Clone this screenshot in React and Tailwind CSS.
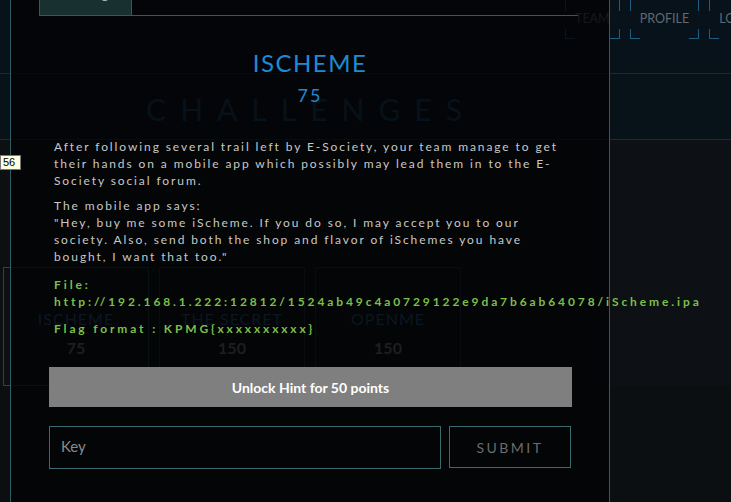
import React from "react"

const NavItem = ({ label }) => (
  <div className="relative h-[40px] px-[10px] flex items-center text-[12.5px] text-[#5f6b74] uppercase">
    <span className="absolute left-0 top-0 w-[10px] h-[12px] border-l border-t border-[#1e5b80]" />
    <span className="absolute right-0 top-0 w-[10px] h-[12px] border-r border-t border-[#1e5b80]" />
    <span className="absolute left-0 bottom-0 w-[10px] h-[10px] border-l border-b border-[#1e5b80]" />
    <span className="absolute right-0 bottom-0 w-[10px] h-[10px] border-r border-b border-[#1e5b80]" />
    {label}
  </div>
)

const Card = ({ name, score, solved }) => (
  <div
    className={`w-[146px] h-[119px] border flex flex-col items-center justify-center gap-[8px] pt-[16px] ${
      solved ? "border-[#1f4d46]" : "border-[#24323c]"
    }`}
  >
    <p className="w-[110px] text-[16px] leading-[19px] tracking-[1px] text-[#2c6494] text-center uppercase">{name}</p>
    <p className="text-[16px] font-bold text-[#8a8a8a]">{score}</p>
  </div>
)

export default function App() {
  return (
    <div className="relative w-[731px] h-[502px] overflow-hidden bg-[#0c0f12] font-['Lato',sans-serif]">
      {/* page behind the modal */}
      <header className="h-[75px] bg-[#07121a] border-b border-[#1a2a31] flex items-start gap-[10px] pl-[565px] -mt-[1px]">
        <NavItem label="Team" />
        <NavItem label="Profile" />
        <NavItem label="Logout" />
      </header>
      <section className="h-[66px] bg-[#081219] border-b border-[#1d2d34] flex items-center pt-[6px]">
        <h2 className="w-[622px] text-center text-[30px] tracking-[14px] text-[#1a4a6c] uppercase">Challenges</h2>
      </section>
      <div className="pt-[127px] pl-[3px] flex gap-[10px] bg-gradient-to-r from-[#0c1013] to-[#0d1014]">
        <Card name="iScheme" score="75" solved />
        <Card name="The Secret" score="150" />
        <Card name="OpenMe" score="150" />
      </div>

      {/* challenge modal */}
      <div className="absolute left-[10px] top-[-30px] w-[600px] h-[540px] border-x border-[#2d5d62] bg-[#030305]/80">
        <div className="ml-[28px] mr-[31px] flex border-b border-[#2d5d62]">
          <div className="h-[45px] w-[93px] border border-b-0 border-[#2d5d62] bg-[#18302f] pt-[13px] text-center text-[14px] leading-[20px] text-[#a9b4b4]">
            Challenge
          </div>
        </div>

        <h1 className="mt-[32px] text-center text-[24px] leading-[29px] tracking-[1.5px] text-[#1f8ad3]">ISCHEME</h1>
        <p className="mt-[7px] text-center text-[18px] leading-[22px] tracking-[2px] text-[#1f8ad3]">75</p>

        <div className="pl-[38px] pr-[37px]">
          <div className="pl-[5px] mt-[32px] text-[12px] leading-[17px] tracking-[1.9px] text-[#c8c8c8]">
            <p>
              After following several trail left by E-Society, your team manage to get their hands on a mobile app
              which possibly may lead them in to the E-Society social forum.
            </p>
            <p className="mt-[8px]">
              The mobile app says:
              <br />
              "Hey, buy me some iScheme. If you do so, I may accept you to our society. Also, send both the shop and
              flavor of iSchemes you have bought, I want that too."
            </p>
            <p className="mt-[11px] font-bold tracking-[2.9px] text-[#7cbf48] whitespace-nowrap">File:</p>
            <p className="font-bold tracking-[2.9px] text-[#7cbf48] whitespace-nowrap">
              http://192.168.1.222:12812/1524ab49c4a0729122e9da7b6ab64078/iScheme.ipa
            </p>
            <p className="mt-[10px] font-bold tracking-[2.85px] text-[#7cbf48]">Flag format : KPMG{"{xxxxxxxxxx}"}</p>
          </div>

          <button className="mt-[30px] w-full h-[40px] bg-[#7f7f7f] text-white text-[14px] font-bold">
            Unlock Hint for 50 points
          </button>

          <div className="mt-[19px] flex gap-[8px] items-start">
            <input
              placeholder="Key"
              className="w-[392px] h-[43px] border border-[#3b6a6e] bg-transparent px-[11px] pb-[3px] text-[15px] text-[#ccc] placeholder:text-[#8a8a8a] outline-none"
            />
            <button className="w-[122px] h-[42px] border border-[#3b6a6e] text-[14px] tracking-[2.5px] text-[#6b6b6b] uppercase">
              Submit
            </button>
          </div>
        </div>
      </div>

      <div className="absolute left-0 top-[155px] w-[21px] h-[15px] bg-[#ffffe0] border border-[#777] pl-[2px] text-[11px] leading-[13px] text-black font-['Liberation_Sans',sans-serif]">
        56
      </div>
    </div>
  )
}
